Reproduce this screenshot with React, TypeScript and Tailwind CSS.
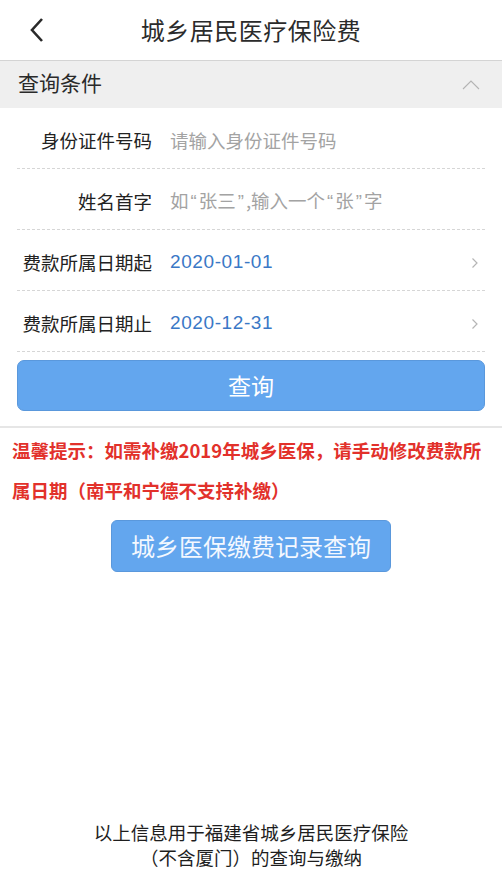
import React from 'react';

const FONT = { fontFamily: '"Noto Sans CJK SC", "Noto Sans", sans-serif' };

const Q = ({ c }: { c: string }) => (
  <span className="font-['Liberation_Sans'] px-[2px]">{c}</span>
);

const Row = ({ label, children, blue, arrow }: { label: string; children: React.ReactNode; blue?: boolean; arrow?: boolean }) => (
  <div className="h-[61px] mx-[17px] pt-[5px] border-b border-dashed border-[#d6d6d6] flex items-center">
    <div className="w-[135px] text-right text-[18.5px] text-[#222]">{label}</div>
    <div
      className={`ml-[18px] flex-1 ${
        blue ? "text-[#3a78c6] text-[19px] tracking-[0.6px] font-['Liberation_Sans']" : 'text-[18.5px] text-[#a3a3a3]'
      }`}
    >
      {children}
    </div>
    {arrow && (
      <svg width="8" height="12" viewBox="0 0 8 12" className="mr-[6px]">
        <path d="M1.5 1.5 L6 6 L1.5 10.5" fill="none" stroke="#b5b5b5" strokeWidth="1.2" />
      </svg>
    )}
  </div>
);

export default function App() {
  return (
    <div style={FONT} className="min-h-[875px] w-[502px] bg-white flex flex-col">
      <div className="h-[61px] relative flex items-center justify-center border-b border-[#d4d4d4]">
        <svg width="18" height="26" viewBox="0 0 18 26" className="absolute left-[28px] top-[17px]">
          <path d="M14 2 L4 13 L14 24" fill="none" stroke="#2a2a2a" strokeWidth="2.6" />
        </svg>
        <div className="text-[24px] text-[#2b2b2b] tracking-[0.5px]">城乡居民医疗保险费</div>
      </div>

      <div className="h-[47px] bg-[#efefef] flex items-center justify-between pl-[18px] pr-[22px]">
        <div className="text-[21px] text-[#2a2a2a] -mt-[3px]">查询条件</div>
        <svg width="18" height="10" viewBox="0 0 18 10">
          <path d="M1 9 L9 1 L17 9" fill="none" stroke="#b3b3b3" strokeWidth="1.1" />
        </svg>
      </div>

      <Row label="身份证件号码">请输入身份证件号码</Row>
      <Row label="姓名首字">
        如<Q c="“" />张三<Q c="”" />,输入一个<Q c="“" />张<Q c="”" />字
      </Row>
      <Row label="费款所属日期起" blue arrow>2020-01-01</Row>
      <Row label="费款所属日期止" blue arrow>2020-12-31</Row>

      <div className="mx-[17px] mt-[8px] h-[51px] rounded-[7px] bg-[#63a6ee] border border-[#5a98dc] flex items-center justify-center text-white text-[23px]">
        查询
      </div>

      <div className="mt-[15px] h-[2px] bg-[#e6e6e6]" />

      <div className="px-[12px] pt-[2px] text-[18.5px] leading-[40px] font-bold text-[#e2312b]">
        温馨提示：如需补缴2019年城乡医保，请手动修改费款所<br />
        属日期（南平和宁德不支持补缴）
      </div>

      <div className="mt-[10px] self-center w-[280px] h-[52px] rounded-[6px] bg-[#63a6ee] border border-[#5a98dc] flex items-center justify-center text-[24px] text-[#f4f8ff]">
        城乡医保缴费记录查询
      </div>

      <div className="mt-auto pb-[5px] text-center text-[18.5px] leading-[25px] text-[#1e1e1e]">
        <div>以上信息用于福建省城乡居民医疗保险</div>
        <div>（不含厦门）的查询与缴纳</div>
      </div>
    </div>
  );
}
